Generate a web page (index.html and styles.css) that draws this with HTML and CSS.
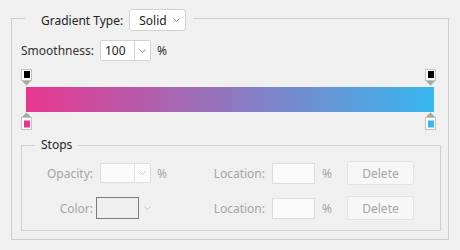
FILE: index.html
```html
<!DOCTYPE html>
<html lang="en">
<head>
  <meta charset="UTF-8" />
  <title>Gradient Editor</title>
  <link rel="stylesheet" href="styles.css">
</head>
<body>
  <fieldset class="editor">
    <legend class="editor-legend">
      <span class="label">Gradient Type:</span>
      <span class="dropdown">
        Solid
        <svg class="chevron" width="7" height="4" viewBox="0 0 7 4"><polyline points="0.5,0.5 3.5,3.5 6.5,0.5" /></svg>
      </span>
    </legend>

    <div class="smooth-row">
      <span class="label">Smoothness:</span>
      <span class="combo">
        <span class="combo-value">100</span>
        <span class="combo-arrow">
          <svg class="chevron" width="7" height="4" viewBox="0 0 7 4"><polyline points="0.5,0.5 3.5,3.5 6.5,0.5" /></svg>
        </span>
      </span>
      <span class="unit">%</span>
    </div>

    <!-- Gradient ramp with opacity stops above and color stops below -->
    <div class="ramp">
      <div class="stop-row">
        <svg class="stop" width="11" height="18" viewBox="0 0 11 18">
          <rect x="0.5" y="0.5" width="10" height="11" fill="#fff" stroke="#c4c4c4" />
          <rect x="3" y="2" width="6" height="7" fill="#000" />
          <polygon points="1,12 10,12 5.5,16.5" fill="#a6a6a6" />
        </svg>
        <svg class="stop" width="11" height="18" viewBox="0 0 11 18">
          <rect x="0.5" y="0.5" width="10" height="11" fill="#fff" stroke="#c4c4c4" />
          <rect x="3" y="2" width="6" height="7" fill="#000" />
          <polygon points="1,12 10,12 5.5,16.5" fill="#a6a6a6" />
        </svg>
      </div>
      <div class="gradient-bar"></div>
      <div class="stop-row">
        <svg class="stop" width="11" height="18" viewBox="0 0 11 18">
          <polygon points="5.5,0.5 10,5 1,5" fill="#a6a6a6" />
          <rect x="0.5" y="5.5" width="10" height="12" fill="#fff" stroke="#c4c4c4" />
          <rect x="3" y="8.5" width="6" height="7" fill="#e8368f" />
        </svg>
        <svg class="stop" width="11" height="18" viewBox="0 0 11 18">
          <polygon points="5.5,0.5 10,5 1,5" fill="#a6a6a6" />
          <rect x="0.5" y="5.5" width="10" height="12" fill="#fff" stroke="#c4c4c4" />
          <rect x="3" y="8.5" width="6" height="7" fill="#39b6ee" />
        </svg>
      </div>
    </div>

    <fieldset class="stops">
      <legend class="stops-legend">Stops</legend>
      <div class="stops-grid">
        <span class="field-label">Opacity:</span>
        <span class="field">
          <span class="combo combo-off">
            <span class="combo-value"></span>
            <span class="combo-arrow">
              <svg class="chevron" width="7" height="4" viewBox="0 0 7 4"><polyline points="0.5,0.5 3.5,3.5 6.5,0.5" /></svg>
            </span>
          </span>
          <span class="unit off">%</span>
        </span>
        <span class="field-label">Location:</span>
        <span class="text-box"></span>
        <span class="unit off pct">%</span>
        <button class="delete-button" disabled>Delete</button>

        <span class="field-label">Color:</span>
        <span class="field field-color">
          <span class="swatch"></span>
          <svg class="chevron" width="7" height="4" viewBox="0 0 7 4"><polyline points="0.5,0.5 3.5,3.5 6.5,0.5" /></svg>
        </span>
        <span class="field-label">Location:</span>
        <span class="text-box"></span>
        <span class="unit off pct">%</span>
        <button class="delete-button" disabled>Delete</button>
      </div>
    </fieldset>
  </fieldset>
</body>
</html>
```

FILE: styles.css
```css
body {
  margin: 0;
  padding: 5px 11px 10px;
  background: #f0f0f0;
  font-family: "Noto Sans", "Open Sans", sans-serif;
  font-size: 12px;
  color: #333;
}

.editor {
  margin: 0;
  padding: 0 7px 8px 9px;
  border: 1px solid #cdcdcd;
  min-width: 0;
}

.editor-legend {
  display: flex;
  align-items: center;
  gap: 6px;
  margin-left: 4px;
  padding: 4px 7px 0 16px;
  color: #222;
}

.chevron {
  fill: none;
  stroke: #8a8a8a;
  stroke-width: 1;
}

.dropdown {
  display: flex;
  align-items: center;
  justify-content: space-between;
  box-sizing: border-box;
  width: 57px;
  height: 22px;
  padding: 0 5px 0 9px;
  background: #fff;
  border: 1px solid #d2d2d2;
  border-radius: 3px;
}

.smooth-row {
  display: flex;
  align-items: center;
  gap: 6px;
  height: 21px;
  margin-top: 9px;
}

.combo {
  display: flex;
  box-sizing: border-box;
  width: 51px;
  height: 21px;
  background: #fff;
  border: 1px solid #d2d2d2;
  border-radius: 2px;
  color: #222;
}

.combo-value {
  flex: 1;
  padding-left: 4px;
  line-height: 19px;
}

.combo-arrow {
  display: flex;
  align-items: center;
  justify-content: center;
  width: 15px;
  border-left: 1px solid #d2d2d2;
}

/* Ramp */
.ramp {
  margin-top: 8px;
}

.stop-row {
  display: flex;
  justify-content: space-between;
  width: 415px;
}

.stop {
  display: block;
}

.gradient-bar {
  margin-left: 5px;
  width: 408px;
  height: 25px;
  background: linear-gradient(to right, #e8378e, #38b7f0);
}

/* Stops group */
.stops {
  margin: 7px 0 0;
  padding: 0 0 10px;
  border: 1px solid #d0d0d0;
  min-width: 0;
}

.stops-legend {
  margin-left: 13px;
  padding: 0 6px;
  line-height: 16px;
  color: #222;
}

.stops-grid {
  display: grid;
  grid-template-columns: 71px 106px 66px 50px 32px 67px;
  grid-auto-rows: 24px;
  row-gap: 11px;
  align-items: center;
  margin-top: 8px;
  color: #a5a5a5;
}

.field-label {
  text-align: right;
}

.field {
  display: flex;
  align-items: center;
  gap: 6px;
  padding-left: 7px;
}

.field-color {
  gap: 5px;
  padding-left: 3px;
}

.combo-off {
  height: 20px;
  background: #fbfbfb;
  border-color: #dedede;
}

.combo-off .combo-arrow {
  border-left-color: #e2e2e2;
}

.combo-off .chevron,
.field-color .chevron {
  stroke: #c4c4c4;
}

.swatch {
  box-sizing: border-box;
  width: 43px;
  height: 22px;
  background: #efefef;
  border: 1px solid #7b7b7b;
}

.text-box {
  box-sizing: border-box;
  width: 43px;
  height: 21px;
  margin-left: 7px;
  background: #fafafa;
  border: 1px solid #dcdcdc;
}

.unit.off {
  color: #a5a5a5;
}

.pct {
  padding-left: 7px;
}

.delete-button {
  box-sizing: border-box;
  width: 67px;
  height: 24px;
  padding: 0;
  background: #f7f7f7;
  border: 1px solid #e2e2e2;
  border-radius: 3px;
  font: inherit;
  color: #a5a5a5;
}
```
